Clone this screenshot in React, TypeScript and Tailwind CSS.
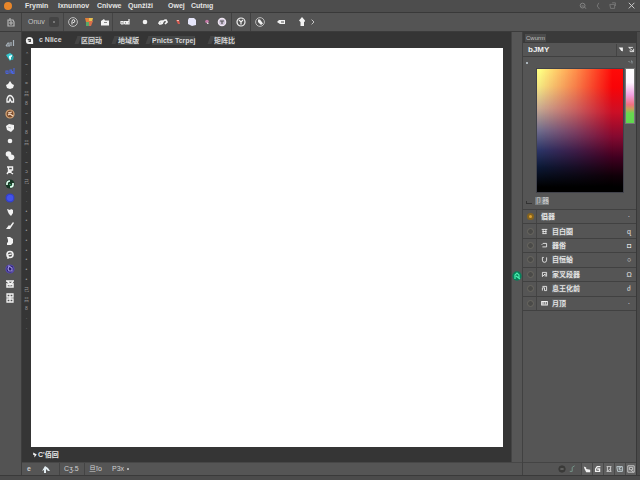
import type { ReactNode } from "react";

type Shape = { label: string; art: ReactNode };

const W = "#f2f2f2";

function Glyph({ children, size = "size-[10px]" }: { children: ReactNode; size?: string }) {
  return (
    <svg viewBox="0 0 10 10" className={`${size} shrink-0`} fill="none" stroke={W} strokeWidth="1.2" aria-hidden="true">
      {children}
    </svg>
  );
}

function IconButton({ label, className = "", children }: { label: string; className?: string; children: ReactNode }) {
  return (
    <button type="button" aria-label={label} className={`flex shrink-0 items-center justify-center ${className}`}>
      {children}
    </button>
  );
}

const menus = [
  { text: "Frymin", width: "w-[33px]" },
  { text: "Ixnunnov", width: "w-[39px]" },
  { text: "Cnivwe", width: "w-[31px]" },
  { text: "Qunžiži", width: "w-[40px]" },
  { text: "Owej", width: "w-[23px]" },
  { text: "Cutnıg", width: "w-[30px]" },
];

const ring = (
  <>
    <circle cx="5" cy="5" r="4.4" stroke="#c8c8c8" strokeWidth="0.9" />
    <path d="M4 7.5V4.5Q4 2.7 5.5 2.7T6.8 4.2Q6.8 5.6 5 5.6" strokeWidth="1" />
  </>
);

const options: { label: string; width: string; art: ReactNode }[] = [
  { label: "Brush", width: "w-[18px] border-l border-[#444]", art: ring },
  {
    label: "Swatch",
    width: "w-[16px]",
    art: (
      <g stroke="none">
        <path d="M1 1h4v4H2z" fill="#e0803a" />
        <path d="M5 1h4L8 5H5z" fill="#e8c050" />
        <path d="M2 5h3v4H2z" fill="#58a868" />
        <path d="M5 4h4L7 9H5z" fill="#d8704a" />
      </g>
    ),
  },
  { label: "Folder", width: "w-[15px]", art: <g stroke="none"><path d="M1 4l3-2 1 1.5h4V8.5H1z" fill={W} /><path d="M4 5h3v1H4z" fill="#888" /></g> },
  { label: "Mode", width: "w-[25px] border-l border-[#444]", art: <path d="M1 7V4.5h2V7H1M4.5 7V4.5h1.8V7H4.5M9 2v5H7.5V4.5H9" /> },
  { label: "Tip", width: "w-[16px]", art: <circle cx="5" cy="5" r="2.3" fill={W} stroke="none" /> },
  { label: "Cloud", width: "w-[20px]", art: <path d="M1 7Q1 4 4 4L3 7H1M4 7Q5 3 8 3l1 2-2 2" strokeWidth="1.7" /> },
  { label: "Colour", width: "w-[10px]", art: <g stroke="none"><path d="M3 3h3l1 4H5z" fill="#d85a50" /><path d="M4 3h2v1H4z" fill="#f0c0b8" /></g> },
  { label: "Shape", width: "w-[18px]", art: <path d="M2 1h5l2 2v5l-4 1-4-2V3z" fill="#e6e6fa" stroke="none" /> },
  { label: "Point", width: "w-[12px]", art: <g stroke="none"><circle cx="5" cy="4.5" r="1.8" fill="#c47aa8" /><path d="M5 5l2 2H5z" fill="#ddd" /></g> },
  { label: "Blend", width: "w-[18px]", art: <><circle cx="5" cy="5" r="3.7" fill="#cfc3d9" stroke="#efe7f2" /><path d="M3 4h4M5 4v3" stroke="#555" /></> },
  { label: "History", width: "w-[20px] border-x border-[#414141]", art: <><circle cx="5" cy="5" r="4" /><path d="M3 3l2 2 2-2M5 5v2.5" /></> },
  { label: "Rotate", width: "w-[18px]", art: <><circle cx="5" cy="5" r="4.4" stroke="#bbb" strokeWidth="1" /><path d="M3 2.500h2L8 6.500 6 8 3 5z" fill={W} stroke="none" /></> },
  { label: "Card", width: "w-[23px]", art: <><path d="M1 5l2-2h6v4H4z" fill={W} stroke="none" /><path d="M5 5h3" stroke="#666" /></> },
  { label: "Share", width: "w-[19px]", art: <path d="M5 0l3 3.5L7.500 5H7v4H3.5V5L2 3.500z" fill={W} stroke="none" /> },
];

const toolGroups: Shape[][] = [
  [
    { label: "Move", art: <path d="M1 8l2-3h1v3M6 8V4M8.5 2v6M1 8h4" stroke="#a9b4bd" /> },
    { label: "Marquee", art: <g stroke="none"><path d="M1 3l4-2 3 2-1 3-2 3-2-3z" fill="#35c6ce" /><path d="M4 4l3-1v3L5 8 4 6z" fill="#e6ffff" /><path d="M6 5l3-1-1 4H6z" fill="#27a5a8" /></g> },
    { label: "Lasso", art: <path d="M1 7.500V5h2v2.500H1M5 7.500V4h1.500v3.500M9 2v5.500H7.500V5" stroke="#4a64dc" strokeWidth="1.1" /> },
    { label: "Eraser", art: <path d="M5 1l2 3 2 1-1 3-3 1-3-1-1-3 2-1z" fill={W} stroke="none" /> },
    { label: "Pen", art: <path d="M2 8V5Q3 1.500 5 1.500T8.500 5v3H6.500L5 5 4 8z" strokeWidth="1.3" /> },
  ],
  [
    { label: "Crop", art: <><circle cx="5" cy="5" r="4" stroke="#d9a878" fill="#7a4a2a" /><path d="M3 4l4-1M3 6l2-1 3 2" stroke="#f4dcc4" /></> },
    { label: "Bucket", art: <><path d="M1 3l3-2 5 1v4L6 9 2 7z" fill={W} stroke="none" /><path d="M3 4l3 1" stroke="#aaa" strokeWidth="0.8" /></> },
    { label: "Dot", art: <circle cx="5" cy="4" r="2.3" fill={W} stroke="none" /> },
    { label: "Stamp", art: <g fill={W} stroke="none"><circle cx="3.5" cy="3" r="2.8" /><ellipse cx="6.3" cy="6.2" rx="3" ry="2.8" /></g> },
    { label: "Person", art: <path d="M2 2h5.5v3H3.5V2M2 9l2-3 4 3M6 5v3" strokeWidth="1.4" /> },
    { label: "Recycle", art: <><circle cx="5" cy="5" r="4.5" fill="#173725" stroke="none" /><path d="M2 6Q1.500 2 5 2M8 4v2Q8 8 5 8" stroke="#e0fff0" strokeWidth="1.7" /><path d="M4 5l2 1" stroke="#35a764" /></> },
    { label: "Blue", art: <circle cx="5" cy="5" r="3.9" fill="#4353e8" stroke="#333fca" /> },
    { label: "Hand", art: <path d="M2 2l3 1 1-1 2 1v3L6 9 4 7 3 5z" fill={W} stroke="none" /> },
    { label: "Pencil", art: <path d="M1 8l3-4 1 1 3-4 1 1-4 6H1z" fill={W} stroke="none" /> },
  ],
  [
    { label: "Dodge", art: <><path d="M2 1h3l3 2v4L6 9H2V7l1-1V4z" fill={W} stroke="none" /></> },
    { label: "Zoom", art: <><circle cx="5" cy="4.5" r="3" strokeWidth="1.6" /><path d="M3 9V5l3-1v1" /></> },
    { label: "Swirl", art: <><circle cx="5" cy="5" r="4" fill="#2a206b" stroke="#584ab0" /><path d="M4 2l3 2v3H4L3 5z" stroke="#9a8ee0" /></> },
  ],
  [
    { label: "Gradient", art: <path d="M1 2h8M2 2l3 3 3-2M2 5l3 1 3-1v3H2z" strokeWidth="1.5" /> },
    { label: "Frame", art: <path d="M2 1h6v3H2zM2 6h6v3H2zM5 1v8" strokeWidth="1.3" /> },
  ],
];

const tabs = [
  { text: "区回动", width: "w-[37px]" },
  { text: "地域版", width: "w-[34px]" },
  { text: "Pnlcts Tcrpej", width: "w-[62px]" },
  { text: "矩阵比", width: "w-[26px]" },
];

const rulerMarks = ["⌃", "~", "·", "=", "吕", "8", "~", "ɩ", "8", "吕", "·", "~", "ɔ", "己", "·", "·", "•", "•", "•", "•", "•", "•", "•", "•", "己", "吕", "8", "·", "·"];

const layers = [
  { name: "倡器", art: null, end: "·" },
  { name: "目白圈", art: <path d="M1 2h8M2 5h6M2 8h6M3 2v6M7 2v6" />, end: "ɋ" },
  { name: "器俗", art: <path d="M1 4l2-2h5v5H2" />, end: "◘" },
  { name: "自恒蛤", art: <path d="M2 2v4q0 3 3 3t3-3V2M2 2h2" />, end: "○" },
  { name: "家叉段器", art: <path d="M2 2h6v6M2 8l4-4v4M2 2v6" />, end: "Ω" },
  { name: "息王化前", art: <path d="M2 2h6v6H5V4H2v4" />, end: "ძ" },
  { name: "月顶", art: <path d="M1 2h8v5H1zM3 3v3M6 3v3M1 7h4" strokeWidth="1.5" />, end: "·" },
];

const footIcons: Shape[] = [
  { label: "Link", art: <path d="M1 2l3 1v2l5 1v3H4L2 5z" fill={W} stroke="none" /> },
  { label: "Effects", art: <path d="M8 2H4L2 5v3h5V5H4" strokeWidth="1.6" /> },
  { label: "Mask", art: <path d="M2 2h6M2 8h6M3 2v6M7 2v6M3 8l4-4" stroke="#ccc" /> },
  { label: "Group", art: <path d="M1 2h7v6H2zM4 2v4h3M4 5l3-3" stroke="#bdcbd0" /> },
  { label: "New layer", art: <path d="M1 1h8v8H1zM3 3h4v3H3zM5 6l3 3" stroke="#ccc" /> },
];

function MenuBar() {
  return (
    <header className="flex h-[13px] shrink-0 items-center border-b border-[#393939] bg-[#4d4d4d] pr-[4px] pl-[4px]">
      <span className="mr-[13px] size-[8px] shrink-0 rounded-full bg-[#e8862a]" />
      <nav className="flex flex-1 items-center font-bold text-[#e4e4e4]">
        {menus.map((m) => (
          <button key={m.text} type="button" className={`${m.width} shrink-0 text-left whitespace-nowrap text-[7px]`}>
            {m.text}
          </button>
        ))}
      </nav>
      <div className="flex items-center gap-[7px]">
        <IconButton label="Search"><Glyph size="size-[8px]"><circle cx="4.5" cy="4.5" r="3" stroke="#858585" /><path d="M3 5h3M7 7l2 1" stroke="#858585" /></Glyph></IconButton>
        <IconButton label="Minimise"><Glyph size="size-[8px]"><path d="M6 1L4 5l3 4" stroke="#777" /></Glyph></IconButton>
        <IconButton label="Restore"><Glyph size="size-[8px]"><path d="M1 3h6v5H2zM4 1h4v4" stroke="#777" /></Glyph></IconButton>
        <IconButton label="Close" className="ml-[4px]"><Glyph size="size-[8px]"><path d="M1 1l7 7M8 1L1 8" stroke="#cfcfcf" /></Glyph></IconButton>
      </div>
    </header>
  );
}

function OptionsBar() {
  return (
    <div className="flex h-[19px] shrink-0 items-stretch border-b border-[#3b3b3b] bg-[#545454]">
      <IconButton label="Document" className="w-[22px] border-r border-[#414141]">
        <Glyph><path d="M2 3h5l1 2v4H2zM4 1v3M3 6h4M5 4v4" stroke="#b5b5b5" /></Glyph>
      </IconButton>
      <button type="button" className="w-[27px] pl-[6px] text-left text-[7px] text-[#c5c5c5]">Onuv</button>
      <IconButton label="Preset" className="my-[4px] mr-[4px] w-[10px] rounded-[2px] bg-[#444]">
        <span className="size-[2px] bg-[#777]" />
      </IconButton>
      {options.map((o) => (
        <IconButton key={o.label} label={o.label} className={o.width}>
          <Glyph>{o.art}</Glyph>
        </IconButton>
      ))}
      <IconButton label="More" className="w-[6px]">
        <Glyph size="size-[6px]"><path d="M1 1l4 4-4 4" /></Glyph>
      </IconButton>
    </div>
  );
}

function ToolColumn() {
  return (
    <aside className="flex w-[22px] shrink-0 flex-col gap-[1px] border-r border-[#3d3d3d] bg-[#535353] pt-[4px] pr-[2px]">
      {toolGroups.map((group) => (
        <div key={group[0].label} className="flex flex-col">
          {group.map((t) => (
            <IconButton key={t.label} label={t.label} className="h-[14px]">
              <Glyph>{t.art}</Glyph>
            </IconButton>
          ))}
        </div>
      ))}
    </aside>
  );
}

function TabStrip() {
  return (
    <div className="flex h-[16px] shrink-0 items-center pl-[3px] text-[7px] text-[#d5d5d5]">
      <Glyph size="size-[9px]"><path d="M1 5Q1 1 5 1t4 4v4H4Q1 9 1 5z" fill={W} stroke="none" /><path d="M3 4h3v2H4" stroke="#444" /></Glyph>
      <button type="button" className="w-[42px] pl-[5px] text-left font-bold whitespace-nowrap">c NIice</button>
      {tabs.map((t) => (
        <button key={t.text} type="button" className={`${t.width} flex h-[9px] shrink-0 items-center whitespace-nowrap`}>
          <span className="mr-[1px] h-[8px] w-[4px] -skew-x-[20deg] bg-[#454545]" />
          <span className="bg-[#454747] leading-[9px] font-bold">{t.text}</span>
        </button>
      ))}
    </div>
  );
}

function Workspace() {
  return (
    <div className="flex min-w-0 flex-1 flex-col bg-[#353535]">
      <TabStrip />
      <div className="flex min-h-0 flex-1">
        <div className="flex h-[284px] w-[9px] shrink-0 flex-col items-center justify-between pt-[2px] text-[5px] leading-[8px] text-[#9a9a9a]">
          {rulerMarks.map((m, i) => (
            <span key={i}>{m}</span>
          ))}
        </div>
        <main className="mr-[8px] flex-1 bg-white" />
      </div>
      <div className="flex h-[15px] shrink-0 items-center pl-[10px] text-[7px] font-bold text-[#e8e8e8]">
        <Glyph size="size-[6px]"><path d="M2 1l6 3-4 5V5H2z" fill={W} stroke="none" /></Glyph>
        <span>C'佰回</span>
      </div>
    </div>
  );
}

function StatusBar() {
  return (
    <div className="flex h-[13px] shrink-0 items-stretch border-t border-[#474747] bg-[#555] text-[7px] text-[#cfcfcf]">
      <button type="button" className="w-[14px] text-center font-bold">e</button>
      <IconButton label="Sync" className="w-[24px] border-r border-[#444] pr-[4px]">
        <Glyph><path d="M1 7l3-5 3 2 2 3H7L5 5v4H3V6z" fill="#e3edf2" stroke="none" /></Glyph>
      </IconButton>
      <span className="flex w-[25px] items-center border-r border-[#444] pl-[4px]">Cʒ.5</span>
      <span className="flex w-[27px] items-center pl-[4px]">旦ĩo</span>
      <button type="button" className="flex items-center gap-[3px] whitespace-nowrap">
        P3x
        <span className="size-[2px] rounded-full bg-[#d0d0d0]" />
      </button>
    </div>
  );
}

function ColourPanel() {
  return (
    <section className="flex flex-col">
      <div className="flex h-[11px] items-center bg-[#3a3a3a] pl-[2px]">
        <button type="button" className="bg-[#4b4b4b] px-[1px] text-[6px] leading-[8px] text-[#bdbdbd]">Cwurm</button>
      </div>
      <div className="flex h-[14px] items-center border-b border-[#404040] pl-[5px]">
        <h2 className="flex-1 text-[8px] leading-[10px] font-bold text-[#f0f0f0]">bJMY</h2>
        <IconButton label="Collapse" className="h-[12px] w-[10px] border-l border-[#444]">
          <Glyph size="size-[7px]"><path d="M1 2h6v6L4 6z" fill={W} stroke="none" /></Glyph>
        </IconButton>
        <IconButton label="Options" className="h-[12px] w-[10px]">
          <Glyph size="size-[7px]"><path d="M1 2l7 6M1 2h6M3 6v2h5V4" /></Glyph>
        </IconButton>
      </div>
      <div className="flex h-[11px] items-center justify-between px-[3px]">
        <span className="size-[2px] bg-[#aab4bb]" />
        <Glyph size="size-[5px]"><path d="M1 2l3 3M6 2h2v5" stroke="#b2c2ca" /></Glyph>
      </div>
      <div className="flex gap-[1px] pr-[1px] pl-[13px]">
        <div className="h-[125px] flex-1 border border-[#41424a] bg-[linear-gradient(to_bottom,#ff0a08_0%,#f80408_15%,#cc0f26_35%,#850a30_55%,#400020_72%,#100008_87%,#000_96%)]">
          <div className="size-full bg-[linear-gradient(to_bottom,#ffff82_0%,#f4e480_14%,#c8a890_32%,#706c8c_50%,#2c3466_66%,#0c1834_80%,#000_96%)] [mask-image:linear-gradient(to_right,#000_4%,rgba(0,0,0,0.55)_45%,transparent_88%)]" />
        </div>
        <div className="h-[56px] w-[10px] border border-[#777] bg-[linear-gradient(to_bottom,#fff_0%,#fdf5ff_25%,#f0a0e0_48%,#f07080_66%,#c8a058_74%,#68d850_82%,#60d84e_100%)]" />
      </div>
      <div className="flex h-[15px] items-center gap-[3px] pl-[3px] text-[7px] text-[#d5d5d5]">
        <span className="mt-[3px] h-[3px] w-[6px] border-b border-l border-[#333]" />
        <span className="bg-[#767a7b] leading-[8px]">卩器</span>
      </div>
    </section>
  );
}

function LayerList() {
  return (
    <ul className="mt-[1px] grid h-[102px] grid-rows-7 border-b border-[#414141]">
      {layers.map((l, i) => (
        <li key={l.name} className="flex items-center border-t border-[#414141] pr-[3px] text-[7px] leading-[9px] text-[#e4e4e4]">
          <button type="button" aria-label={`Show ${l.name}`} className="flex h-full w-[14px] items-center justify-center border-r border-[#444] pl-[2px]">
            <span className={i === 0 ? "size-[7px] rounded-full border-2 border-[#84631f] bg-[#e0a22e]" : "size-[7px] rounded-full border border-[#6a6861] bg-[#4a4a48]"} />
          </button>
          <button type="button" className="flex flex-1 items-center gap-[4px] pl-[4px] text-left">
            {l.art && <Glyph size="size-[7px]">{l.art}</Glyph>}
            <span className="bg-[#606263] font-bold">{l.name}</span>
          </button>
          <span className="w-[8px] text-center">{l.end}</span>
        </li>
      ))}
    </ul>
  );
}

function SidePanel() {
  return (
    <aside className="flex w-[114px] shrink-0 flex-col border-l border-[#414141] bg-[#555]">
      <ColourPanel />
      <LayerList />
      <div className="flex-1" />
      <div className="flex h-[13px] shrink-0 items-center justify-end border-t border-[#444]">
        <IconButton label="Record" className="w-[11px]">
          <Glyph size="size-[8px]"><circle cx="5" cy="5" r="4" fill="#3b3b39" stroke="#3b3b39" /><path d="M3 5h4" stroke="#888" /></Glyph>
        </IconButton>
        <IconButton label="Draw" className="mr-[3px] w-[11px]">
          <Glyph size="size-[8px]"><path d="M1 8h3V3l3-2" stroke="#76968a" /></Glyph>
        </IconButton>
        {footIcons.map((f) => (
          <IconButton key={f.label} label={f.label} className="h-[12px] w-[11px] border-l border-[#494949] bg-[#606060]">
            <Glyph size="size-[8px]">{f.art}</Glyph>
          </IconButton>
        ))}
      </div>
    </aside>
  );
}

export default function App() {
  return (
    <div className="flex h-screen flex-col overflow-hidden bg-[#4d4d4d] font-['Liberation_Sans','Noto_Sans_CJK_SC',sans-serif] leading-[10px]">
      <MenuBar />
      <OptionsBar />
      <div className="flex min-h-0 flex-1">
        <ToolColumn />
        <div className="flex min-w-0 flex-1 flex-col">
          <div className="flex min-h-0 flex-1">
            <Workspace />
            <div className="flex w-[11px] shrink-0 flex-col border-l border-[#444] bg-[#565656] pt-[239px]">
              <IconButton label="Assistant" className="h-[10px]">
                <Glyph><circle cx="5" cy="5" r="4.7" fill="#087e59" stroke="none" /><path d="M3 8V4l2-2 2 2v3L4 5l4 3" stroke="#4af0b0" /></Glyph>
              </IconButton>
            </div>
          </div>
          <StatusBar />
        </div>
        <SidePanel />
        <div className="w-[4px] shrink-0 border-l border-[#393939] bg-[#4a4a4a]" />
      </div>
      <footer className="h-[5px] shrink-0 border-t border-[#3a3a3a] bg-[#4b4b4b]" />
    </div>
  );
}
